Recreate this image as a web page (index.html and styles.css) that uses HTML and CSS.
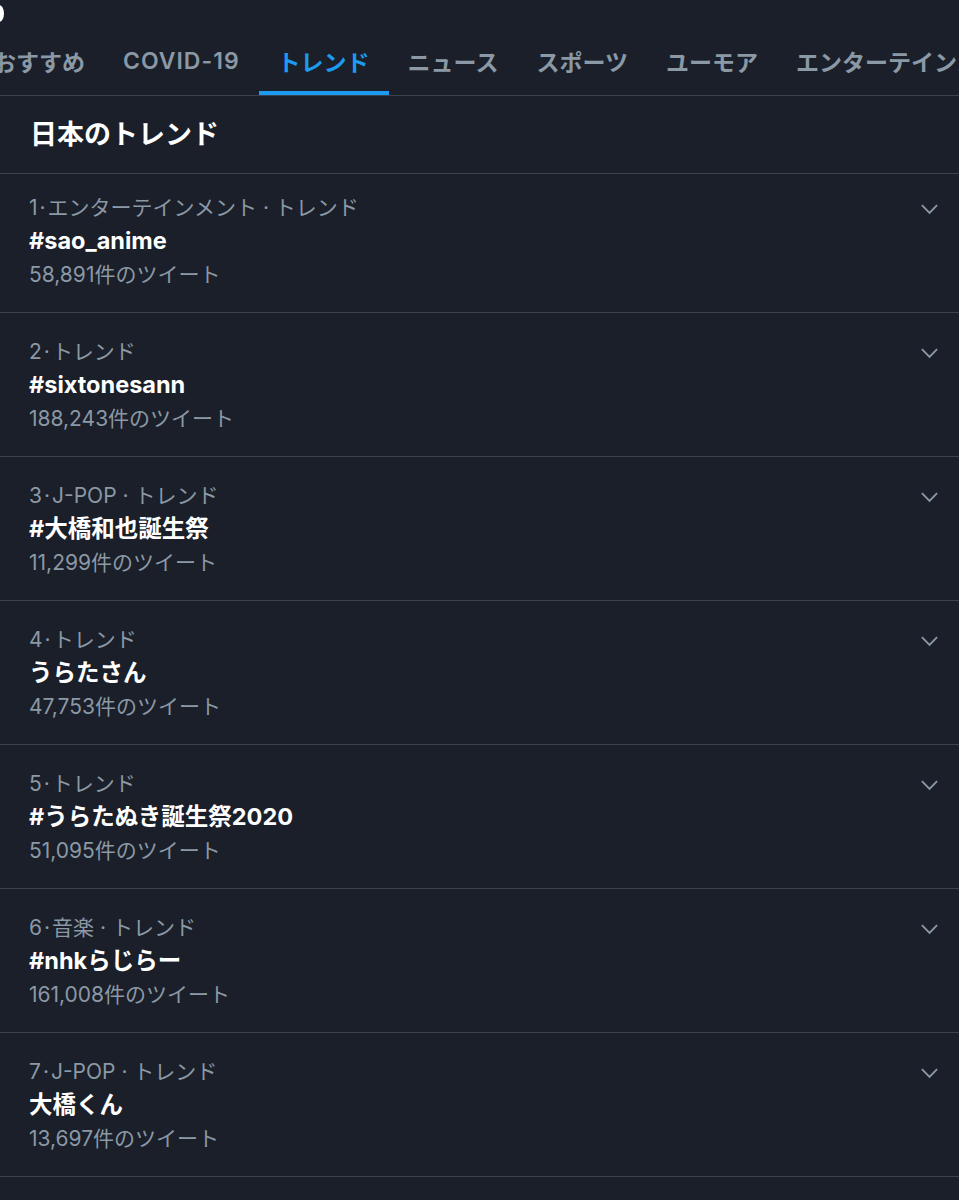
FILE: index.html
```html
<!DOCTYPE html>
<html lang="ja">
<head>
  <meta charset="UTF-8">
  <title>トレンド</title>
  <link rel="stylesheet" href="styles.css">
</head>
<body>
  <div class="page">
    <div class="top"><span class="edge"></span></div>
    <!--タブ-->
    <div class="tabs">
      <a class="tab" href="javascript:;">おすすめ</a>
      <a class="tab latin" href="javascript:;">COVID-19</a>
      <a class="tab active" href="javascript:;">トレンド</a>
      <a class="tab" href="javascript:;">ニュース</a>
      <a class="tab" href="javascript:;">スポーツ</a>
      <a class="tab" href="javascript:;">ユーモア</a>
      <a class="tab" href="javascript:;">エンターテインメント</a>
    </div>
    <h2 class="title">日本のトレンド</h2>
    <!--トレンド一覧-->
    <div class="list">
      <div class="item first">
        <div class="info">
          <div class="meta">1<span class="dot">·</span>エンターテインメント · トレンド</div>
          <div class="name">#sao_anime</div>
          <div class="count">58,891件のツイート</div>
        </div>
        <svg class="more" viewBox="0 0 20 12"><path d="M2 2l8 8 8-8"/></svg>
      </div>
      <div class="item">
        <div class="info">
          <div class="meta">2<span class="dot">·</span>トレンド</div>
          <div class="name">#sixtonesann</div>
          <div class="count">188,243件のツイート</div>
        </div>
        <svg class="more" viewBox="0 0 20 12"><path d="M2 2l8 8 8-8"/></svg>
      </div>
      <div class="item">
        <div class="info">
          <div class="meta">3<span class="dot">·</span>J-POP · トレンド</div>
          <div class="name">#大橋和也誕生祭</div>
          <div class="count">11,299件のツイート</div>
        </div>
        <svg class="more" viewBox="0 0 20 12"><path d="M2 2l8 8 8-8"/></svg>
      </div>
      <div class="item">
        <div class="info">
          <div class="meta">4<span class="dot">·</span>トレンド</div>
          <div class="name">うらたさん</div>
          <div class="count">47,753件のツイート</div>
        </div>
        <svg class="more" viewBox="0 0 20 12"><path d="M2 2l8 8 8-8"/></svg>
      </div>
      <div class="item">
        <div class="info">
          <div class="meta">5<span class="dot">·</span>トレンド</div>
          <div class="name">#うらたぬき誕生祭2020</div>
          <div class="count">51,095件のツイート</div>
        </div>
        <svg class="more" viewBox="0 0 20 12"><path d="M2 2l8 8 8-8"/></svg>
      </div>
      <div class="item">
        <div class="info">
          <div class="meta">6<span class="dot">·</span>音楽 · トレンド</div>
          <div class="name">#nhkらじらー</div>
          <div class="count">161,008件のツイート</div>
        </div>
        <svg class="more" viewBox="0 0 20 12"><path d="M2 2l8 8 8-8"/></svg>
      </div>
      <div class="item">
        <div class="info">
          <div class="meta">7<span class="dot">·</span>J-POP · トレンド</div>
          <div class="name">大橋くん</div>
          <div class="count">13,697件のツイート</div>
        </div>
        <svg class="more" viewBox="0 0 20 12"><path d="M2 2l8 8 8-8"/></svg>
      </div>
    </div>
  </div>
</body>
</html>
```

FILE: styles.css
```css
*{
  margin: 0;
  padding: 0;
  box-sizing: border-box;
}
html, body{
  background: #1a1f29;
}
body{
  font-family: Inter, "Noto Sans CJK JP", sans-serif;
  color: #fff;
  overflow: hidden;
}
.page{
  width: 959px;
  height: 1200px;
  overflow: hidden;
}
.top{
  height: 31px;
  padding-top: 5px;
}
.top .edge{
  display: block;
  width: 10px;
  height: 17px;
  margin-left: -6px;
  border-radius: 50%;
  background: #fff;
}
.tabs{
  display: flex;
  height: 65px;
  margin-left: -26px;
  border-bottom: 1px solid #3a424e;
  white-space: nowrap;
}
.tab{
  display: flex;
  align-items: center;
  flex-shrink: 0;
  height: 100%;
  padding: 0 19px;
  border-bottom: 4px solid transparent;
  font-size: 23px;
  font-weight: 600;
  color: #8b98a5;
  text-decoration: none;
}
.tab.latin{
  letter-spacing: 1px;
}
.tab.active{
  color: #1d9bf0;
  border-bottom-color: #1d9bf0;
}
.title{
  height: 78px;
  padding-left: 30px;
  line-height: 77px;
  font-size: 27px;
  font-weight: 700;
  border-bottom: 1px solid #3a424e;
}
.item{
  display: flex;
  justify-content: space-between;
  padding: 24px 20px 21px 29px;
  border-bottom: 1px solid #3a424e;
}
.item.first{
  padding-top: 19px;
  padding-bottom: 21px;
}
.meta{
  line-height: 30px;
  font-size: 21px;
  color: #8b98a5;
}
.meta .dot{
  margin: 0 2px;
}
.name{
  line-height: 36px;
  font-size: 23.5px;
  font-weight: 700;
}
.count{
  line-height: 32px;
  font-size: 21px;
  color: #8b98a5;
}
.more{
  width: 19px;
  height: 12px;
  margin-top: 10px;
  fill: none;
  stroke: #8b98a5;
  stroke-width: 2;
}
```
